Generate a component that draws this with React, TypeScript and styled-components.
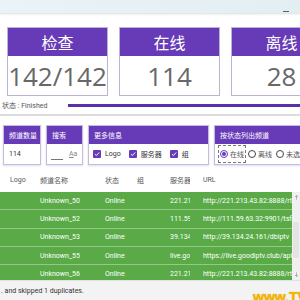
import React from "react";
import styled, { createGlobalStyle } from "styled-components";

const GlobalStyle = createGlobalStyle`
  html, body {
    margin: 0;
    padding: 0;
    width: 300px;
    height: 300px;
    overflow: hidden;
    background: #ffffff;
    font-family: Roboto, "Noto Sans CJK SC", sans-serif;
  }
  * { box-sizing: border-box; }
`;

const Page = styled.div`
  width: 300px;
  height: 300px;
  display: flex;
  flex-direction: column;
  overflow: hidden;
  position: relative;
`;

const TitleBar = styled.div`
  height: 14px;
  flex: 0 0 14px;
  background: linear-gradient(to right, #eaf3f7, #e3eef3);
  border-bottom: 1px solid #e3e7ea;
  box-shadow: 0 1px 2px rgba(0, 0, 0, 0.06);
  display: flex;
  justify-content: flex-end;
  align-items: flex-end;
  padding: 0 11px 1px 0;
`;

const MinDash = styled.div`
  width: 6px;
  height: 1px;
  background: #56636d;
`;

const Cards = styled.div`
  display: flex;
  gap: 11px;
  padding: 13px 0 0 7px;
  flex: 0 0 auto;
`;

const Card = styled.div`
  flex: 0 0 101px;
  height: 69px;
  border: 1px solid #bcb3d2;
  display: flex;
  flex-direction: column;
`;

const CardHead = styled.div`
  height: 28px;
  background: #673ab7;
  color: #ffffff;
  font-size: 16px;
  display: flex;
  align-items: center;
  justify-content: center;
  font-family: "Noto Sans CJK SC", sans-serif;
`;

const CardBody = styled.div`
  flex: 1;
  display: flex;
  align-items: center;
  justify-content: center;
  font-family: "Open Sans", "Noto Sans", sans-serif;
  font-size: 26px;
  color: #686868;
  white-space: nowrap;
`;

const StatusRow = styled.div`
  margin-top: 3px;
  height: 12px;
  display: flex;
  align-items: center;
  padding-left: 2px;
`;

const StatusLabel = styled.div`
  width: 66px;
  font-size: 7px;
  color: #555;
  white-space: nowrap;
`;

const Bar = styled.div`
  flex: 1;
  height: 3px;
  background: #5b2fa7;
`;

const Separator = styled.div`
  margin-top: 3px;
  height: 2px;
  background: #dcdcdc;
`;

const Groups = styled.div`
  margin-top: 9px;
  height: 40px;
  display: flex;
  gap: 5px;
  padding-left: 3px;
  flex: 0 0 40px;
`;

const Group = styled.div<{ $w: number }>`
  flex: 0 0 ${(p) => p.$w}px;
  border: 1px solid #c6bddb;
  box-shadow: 0 1px 2px rgba(103, 58, 183, 0.2);
  display: flex;
  flex-direction: column;
`;

const GroupHead = styled.div`
  height: 18px;
  background: #673ab7;
  color: #fff;
  font-size: 7px;
  display: flex;
  align-items: center;
  padding-left: 5px;
  white-space: nowrap;
`;

const GroupBody = styled.div<{ $pl?: number; $gap?: number }>`
  flex: 1;
  display: flex;
  align-items: center;
  padding: 0 4px 0 ${(p) => p.$pl ?? 4}px;
  gap: ${(p) => p.$gap ?? 3}px;
  font-size: 7px;
  color: #333;
  white-space: nowrap;
`;

const Underline = styled.div<{ $w: number }>`
  width: ${(p) => p.$w}px;
  height: 7px;
  border-bottom: 1px solid #777;
  margin-top: 4px;
`;

const CaseToggle = styled.span`
  color: #888;
  font-size: 7px;
  margin-left: 3px;
  & > u { text-decoration-color: #888; }
`;

const CheckItem = styled.label`
  display: flex;
  align-items: center;
  gap: 4px;
  margin-right: 5px;
`;

const CheckBox = styled.span`
  width: 8px;
  height: 8px;
  background: #673ab7;
  border-radius: 1px;
  display: flex;
  align-items: center;
  justify-content: center;
`;

const RadioItem = styled.label<{ $focus?: boolean }>`
  display: flex;
  align-items: center;
  gap: 2px;
  padding: 3px 1px;
  border: 1px dashed ${(p) => (p.$focus ? "#777" : "transparent")};
  color: #555;
`;

const Radio = styled.span<{ $on?: boolean }>`
  width: 8px;
  height: 8px;
  border-radius: 50%;
  border: 1px solid ${(p) => (p.$on ? "#673ab7" : "#444")};
  display: flex;
  align-items: center;
  justify-content: center;
  &::after {
    content: "";
    width: 4px;
    height: 4px;
    border-radius: 50%;
    background: ${(p) => (p.$on ? "#673ab7" : "transparent")};
  }
`;

const Table = styled.div`
  margin-top: 3px;
  flex: 1;
  display: flex;
  flex-direction: column;
  min-height: 0;
`;

const cols = "40px 65px 32px 33px 20px 1fr";

const HeadRow = styled.div`
  height: 24px;
  flex: 0 0 24px;
  display: grid;
  grid-template-columns: ${cols};
  align-items: center;
  font-size: 7px;
  color: #555;
  padding-right: 8px;
`;

const BodyWrap = styled.div`
  flex: 1;
  display: flex;
  min-height: 0;
`;

const Rows = styled.div`
  flex: 1;
  overflow: hidden;
  background: #5aab48;
`;

const Row = styled.div`
  height: 18.3px;
  display: grid;
  grid-template-columns: ${cols};
  align-items: center;
  border-bottom: 1px solid #94c986;
  font-size: 7px;
  color: #ffffff;
`;

const Cell = styled.div<{ $pl?: number; $ml?: number }>`
  overflow: hidden;
  white-space: nowrap;
  padding-left: ${(p) => p.$pl ?? 0}px;
  margin-left: ${(p) => p.$ml ?? 0}px;
`;

const ScrollBar = styled.div`
  width: 8px;
  flex: 0 0 8px;
  background: #f0f0f0;
  display: flex;
  flex-direction: column;
  justify-content: space-between;
  align-items: center;
  padding: 3px 0;
  position: relative;
`;

const Thumb = styled.div`
  position: absolute;
  left: 1px;
  right: 1px;
  top: 30px;
  height: 36px;
  background: #e4e4e4;
`;

const Footer = styled.div`
  height: 20px;
  flex: 0 0 20px;
  background: #f3f3f3;
  border-top: 1px solid #e2e2e2;
  display: flex;
  align-items: center;
  padding-left: 1px;
  font-size: 7px;
  color: #333;
  white-space: nowrap;
`;

const Watermark = styled.div`
  position: absolute;
  left: 253px;
  bottom: -5px;
  font-family: "Liberation Sans", Arial, sans-serif;
  font-weight: bold;
  font-size: 14px;
  color: #f2b705;
  text-shadow: 0 0 1px #e79a00;
  white-space: nowrap;
`;

const Check = () => (
  <svg width="6" height="6" viewBox="0 0 10 10">
    <path d="M1.5 5.2 L4 7.6 L8.6 2.4" stroke="#fff" strokeWidth="1.6" fill="none" />
  </svg>
);

const Arrow = ({ down }: { down?: boolean }) => (
  <svg width="5" height="5" viewBox="0 0 10 10" style={{ position: "relative", zIndex: 1 }}>
    <path
      d={down ? "M5 1 V9 M2 6 L5 9 L8 6" : "M5 9 V1 M2 4 L5 1 L8 4"}
      stroke="#9a9a9a"
      strokeWidth="1.5"
      fill="none"
    />
  </svg>
);

const rows = [
  ["Unknown_50", "Online", "221.213.43.82", "http://221.213.43.82:8888/rtp"],
  ["Unknown_52", "Online", "111.59.63.32", "http://111.59.63.32:9901/tsfile"],
  ["Unknown_53", "Online", "39.134.24.161", "http://39.134.24.161/dbiptv"],
  ["Unknown_55", "Online", "live.goodiptv.club", "https://live.goodiptv.club/api"],
  ["Unknown_56", "Online", "221.213.43.82", "http://221.213.43.82:8888/rtp"],
];

export default function App() {
  return (
    <Page>
      <GlobalStyle />
      <TitleBar>
        <MinDash />
      </TitleBar>
      <Cards>
        <Card>
          <CardHead>检查</CardHead>
          <CardBody>142/142</CardBody>
        </Card>
        <Card>
          <CardHead>在线</CardHead>
          <CardBody>114</CardBody>
        </Card>
        <Card>
          <CardHead>离线</CardHead>
          <CardBody>28</CardBody>
        </Card>
      </Cards>
      <StatusRow>
        <StatusLabel>状态 : Finished</StatusLabel>
        <Bar />
      </StatusRow>
      <Separator />
      <Groups>
        <Group $w={38}>
          <GroupHead>频道数量</GroupHead>
          <GroupBody $pl={5}>114</GroupBody>
        </Group>
        <Group $w={37}>
          <GroupHead>搜索</GroupHead>
          <GroupBody>
            <Underline $w={12} />
            <CaseToggle>
              <u>A</u>a
            </CaseToggle>
          </GroupBody>
        </Group>
        <Group $w={121}>
          <GroupHead>更多信息</GroupHead>
          <GroupBody>
            <CheckItem>
              <CheckBox>
                <Check />
              </CheckBox>
              Logo
            </CheckItem>
            <CheckItem>
              <CheckBox>
                <Check />
              </CheckBox>
              服务器
            </CheckItem>
            <CheckItem>
              <CheckBox>
                <Check />
              </CheckBox>
              组
            </CheckItem>
          </GroupBody>
        </Group>
        <Group $w={110}>
          <GroupHead>按状态列出频道</GroupHead>
          <GroupBody $gap={0} $pl={3}>
            <RadioItem $focus>
              <Radio $on />
              在线
            </RadioItem>
            <RadioItem>
              <Radio />
              离线
            </RadioItem>
            <RadioItem>
              <Radio />
              未选
            </RadioItem>
          </GroupBody>
        </Group>
      </Groups>
      <Table>
        <HeadRow>
          <Cell $pl={10}>Logo</Cell>
          <Cell>频道名称</Cell>
          <Cell>状态</Cell>
          <Cell>组</Cell>
          <Cell>服务器</Cell>
          <Cell $ml={13}>URL</Cell>
        </HeadRow>
        <BodyWrap>
          <Rows>
            {rows.map((r) => (
              <Row key={r[0]}>
                <Cell $pl={10}></Cell>
                <Cell>{r[0]}</Cell>
                <Cell>{r[1]}</Cell>
                <Cell></Cell>
                <Cell>{r[2]}</Cell>
                <Cell $ml={13}>{r[3]}</Cell>
              </Row>
            ))}
          </Rows>
          <ScrollBar>
            <Arrow />
            <Thumb />
            <Arrow down />
          </ScrollBar>
        </BodyWrap>
      </Table>
      <Footer>. and skipped 1 duplicates.</Footer>
      <Watermark>www.TVBox</Watermark>
    </Page>
  );
}
